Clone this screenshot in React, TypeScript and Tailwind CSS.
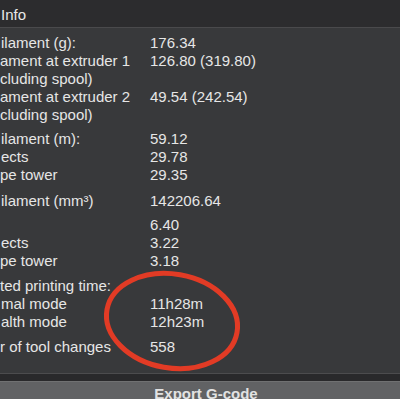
import React from 'react';

type Row = { label: string; value?: string; shift?: string };

const groups: { gap: string; rows: Row[] }[] = [
  {
    gap: 'mt-[6px]',
    rows: [
      { label: 'ilament (g):', value: '176.34', shift: 'pl-[1px]' },
      { label: 'ament at extruder 1', value: '126.80 (319.80)' },
      { label: 'cluding spool)' },
      { label: 'ament at extruder 2', value: '49.54 (242.54)' },
      { label: 'cluding spool)' },
    ],
  },
  {
    gap: 'mt-[6px]',
    rows: [
      { label: 'ilament (m):', value: '59.12', shift: 'pl-[1px]' },
      { label: 'ects', value: '29.78', shift: 'pl-[1px]' },
      { label: 'pe tower', value: '29.35' },
    ],
  },
  {
    gap: 'mt-[8px]',
    rows: [{ label: 'ilament (mm³)', value: '142206.64', shift: 'pl-[1px]' }],
  },
  {
    gap: 'mt-[6px]',
    rows: [
      { label: '', value: '6.40' },
      { label: 'ects', value: '3.22', shift: 'pl-[1px]' },
      { label: 'pe tower', value: '3.18' },
    ],
  },
  {
    gap: 'mt-[7px]',
    rows: [
      { label: 'ted printing time:' },
      { label: 'mal mode', value: '11h28m', shift: 'pl-[1px]' },
      { label: 'alth mode', value: '12h23m', shift: 'pl-[1px]' },
    ],
  },
  {
    gap: 'mt-[7px]',
    rows: [{ label: 'r of tool changes', value: '558' }],
  },
];

function InfoRow({ row }: { row: Row }) {
  return (
    <div className="flex h-[18px] items-center leading-[18px]">
      <div className={`w-[150px] shrink-0 whitespace-nowrap ${row.shift ?? ''}`}>{row.label}</div>
      <div className="whitespace-nowrap">{row.value}</div>
    </div>
  );
}

export default function App() {
  return (
    <div
      className="relative w-[400px] h-[399px] overflow-hidden bg-[#38393b] text-[15px] text-[#e6e6e6]"
      style={{ fontFamily: '"Liberation Sans", Arial, sans-serif' }}
    >
      {/* Header */}
      <div className="h-[27px] bg-[#2c2c2e] pt-[6px] pl-[1px] leading-[18px] text-[#e8e8e8]">Info</div>
      <div className="h-px bg-[#4a4a4c]" />

      {/* Sliced info body */}
      <div className="h-[339px]">
        {groups.map((g, i) => (
          <div key={i} className={g.gap}>
            {g.rows.map((r, j) => (
              <InfoRow key={j} row={r} />
            ))}
          </div>
        ))}
      </div>

      {/* Footer */}
      <div className="h-px bg-[#4c4c4e]" />
      <div className="h-[7px] bg-[#29292b]" />
      <div className="flex h-[24px] items-center justify-center border-t border-[#707172] bg-[#616264] pl-[12px] leading-[18px] font-bold text-[#e2e2e2]">
        Export G-code
      </div>

      {/* Hand-drawn red circle */}
      <svg
        className="pointer-events-none absolute left-0 top-0"
        width="400"
        height="399"
        viewBox="0 0 400 399"
      >
        <ellipse
          cx="172"
          cy="321"
          rx="66"
          ry="47"
          transform="rotate(10 172 321)"
          fill="none"
          stroke="#e23b25"
          strokeWidth="5"
        />
      </svg>
    </div>
  );
}
